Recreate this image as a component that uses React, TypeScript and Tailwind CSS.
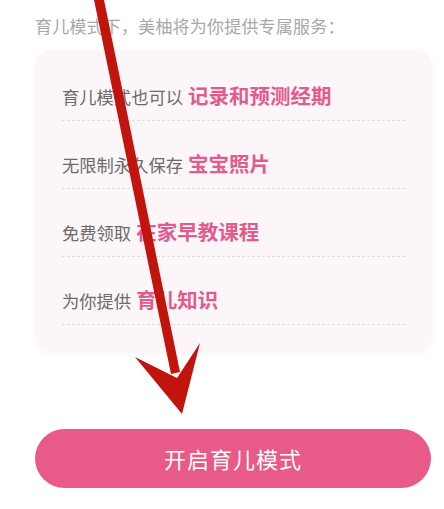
import React from 'react';

const rows = [
  { plain: '育儿模式也可以', bold: '记录和预测经期' },
  { plain: '无限制永久保存', bold: '宝宝照片' },
  { plain: '免费领取', bold: '在家早教课程' },
  { plain: '为你提供', bold: '育儿知识' },
];

const font = { fontFamily: '"Noto Sans CJK SC", "Noto Sans", sans-serif' };

export default function App() {
  return (
    <div className="relative w-[444px] h-[509px] bg-white overflow-hidden" style={font}>
      <div className="px-[35px] pt-[13px]">
        <p className="text-[17px] leading-[26px] text-[#a8a8a8] tracking-[0.2px]">
          育儿模式下，美柚将为你提供专属服务：
        </p>

        {/* Service list card */}
        <div className="mt-[11px] w-[397px] rounded-[16px] bg-[#fdf6f8] shadow-[0_2px_6px_rgba(230,180,195,0.12)] px-[27px] pt-[3px] pb-[27px]">
          {rows.map((r) => (
            <div key={r.bold} className="pt-[27px]">
              <div className="flex items-baseline h-[30px] leading-[30px]">
                <span className="text-[17.3px] text-[#6b6b6b]">{r.plain}</span>
                <span className="ml-[5px] text-[20.5px] font-bold text-[#e25b8e]">{r.bold}</span>
              </div>
              <div className="mt-[10px] border-t border-dashed border-[#e3dcde]" />
            </div>
          ))}
        </div>

        <button className="mt-[77px] w-[396px] h-[59px] rounded-full bg-[#e85a87] text-white text-[22px] tracking-[1px]">
          开启育儿模式
        </button>
      </div>

      {/* Annotation arrow */}
      <svg className="absolute inset-0 pointer-events-none" width="444" height="509" viewBox="0 0 444 509">
        <path d="M93 -5 L103 -5 L180 372 L171 374 Z" fill="#c1140c" />
        <path d="M135 357 L177 378 L200 343 L182 414 Z" fill="#c1140c" />
      </svg>
    </div>
  );
}
